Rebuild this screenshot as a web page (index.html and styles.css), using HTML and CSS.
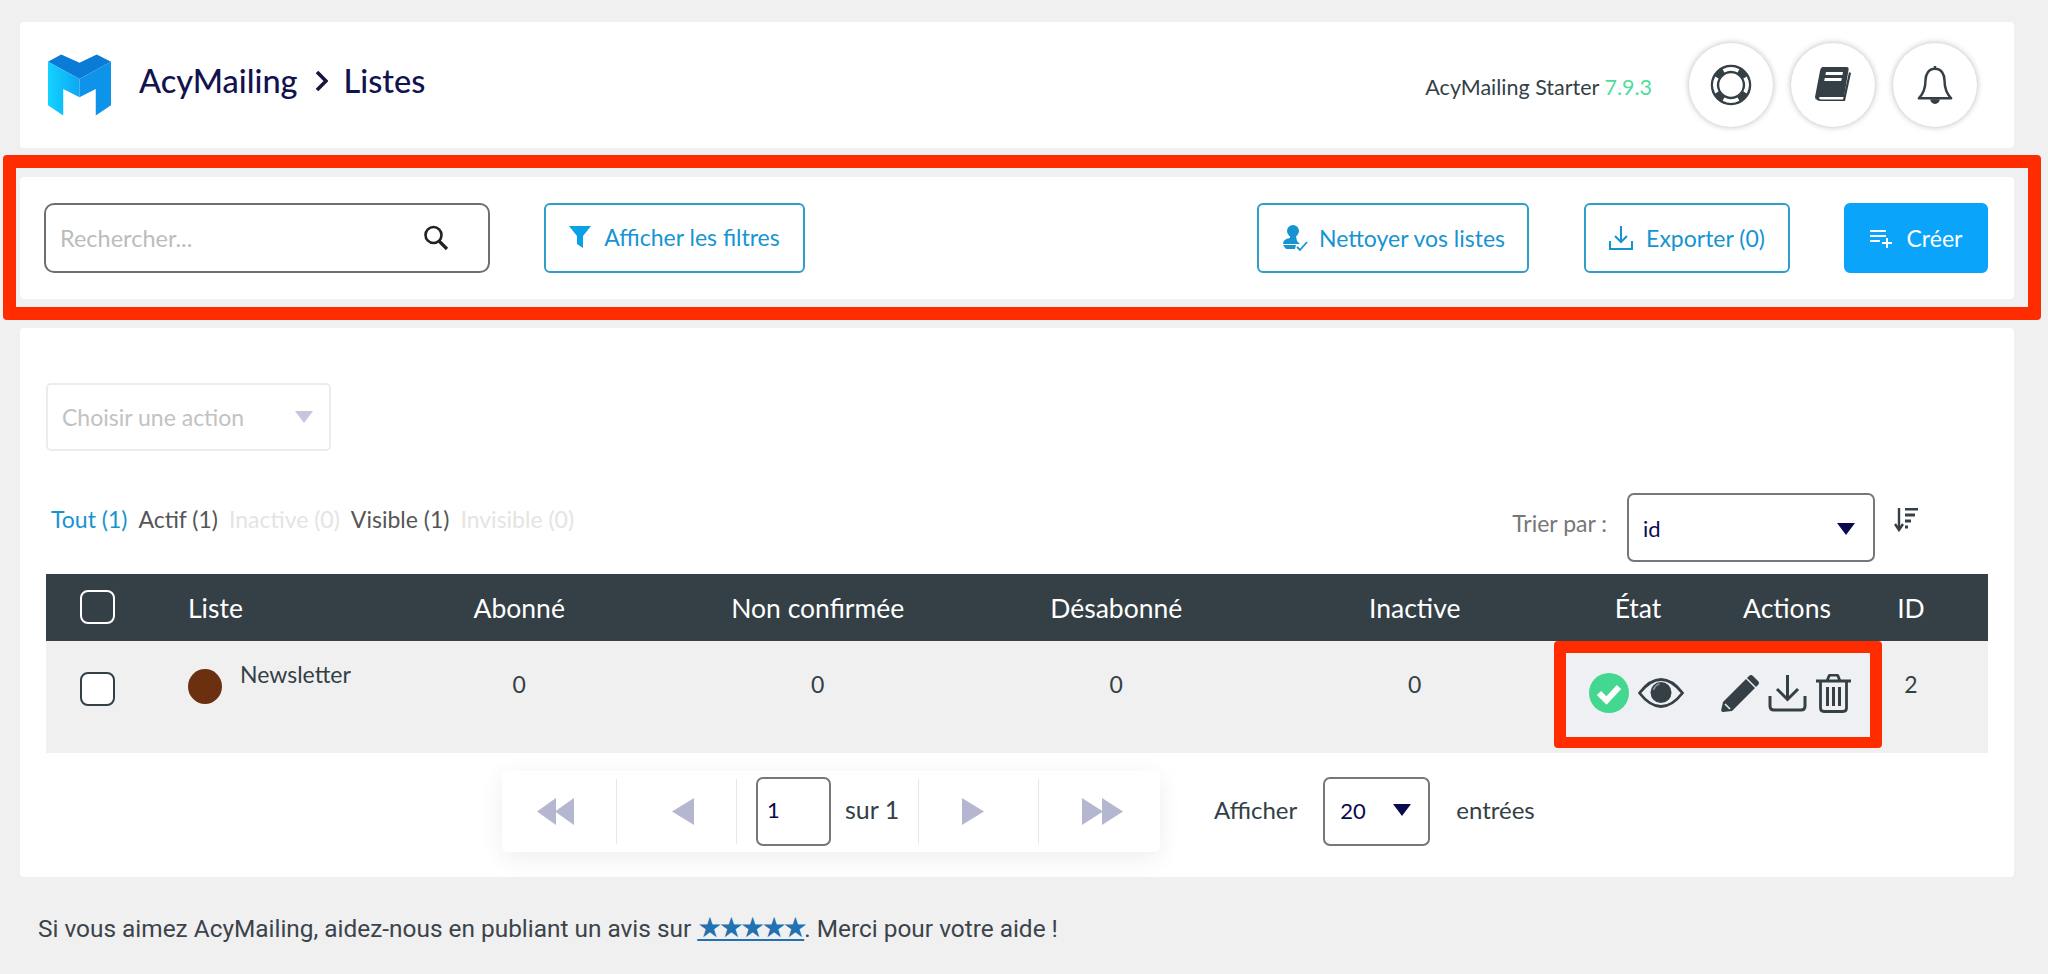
FILE: index.html
```html
<!DOCTYPE html>
<html lang="fr">
<head>
  <meta charset="UTF-8" />
  <meta name="viewport" content="width=device-width, initial-scale=1.0"/>
  <title>AcyMailing - Listes</title>
  <link rel="stylesheet" href="styles.css">
</head>
<body>
  <header class="card top-bar">
    <svg class="logo" viewBox="0 0 62 60">
      <defs>
        <linearGradient id="logoLeft" x1="0" y1="0" x2="1" y2="0">
          <stop offset="0" stop-color="#12d3ff"/>
          <stop offset="1" stop-color="#0ea6f3"/>
        </linearGradient>
      </defs>
      <polygon points="0,7 13,0 31,8 48,0 62,7 31,24" fill="#0a7bd6"/>
      <polygon points="0,7 31,24 31,42 15,34 15,60 0,50" fill="url(#logoLeft)"/>
      <polygon points="62,7 31,24 31,42 47,34 47,60 62,50" fill="#0e93ea"/>
    </svg>
    <h1 class="title">
      <span>AcyMailing</span>
      <svg class="title-chevron" viewBox="0 0 14 22"><path d="M3 2l9 9-9 9" fill="none" stroke="#16163f" stroke-width="3.6"/></svg>
      <span>Listes</span>
    </h1>
    <div class="version">AcyMailing Starter <span class="version-nr">7.9.3</span></div>
    <div class="round-btns">
      <div class="round-btn">
        <svg viewBox="0 0 42 42" width="42" height="42">
          <circle cx="21" cy="21" r="16" fill="none" stroke="#343f46" stroke-width="8.5"/>
          <path d="M13.500 6.900A16 16 0 0 1 28.500 6.900M13.500 35.100A16 16 0 0 0 28.500 35.100M6.900 13.500A16 16 0 0 0 6.900 28.500M35.100 13.500A16 16 0 0 1 35.100 28.500" fill="none" stroke="#fff" stroke-width="3.800"/>
        </svg>
      </div>
      <div class="round-btn">
        <svg viewBox="0 0 40 40" width="40" height="40">
          <path d="M10 2h24q2 0 1.600 2.500L31 32H7q-3 0-4 3l-1-3L7 6q.8-4 3-4z" fill="#343f46"/>
          <path d="M36 7l2 1-6 28H8q-5 0-5-3.500T8 29v2.500q-2 .2-2 1.500t2 1.500h22z" fill="#343f46"/>
          <path d="M13 7h17l-.6 3H12.400zM11.800 13h17l-.6 3H11.200z" fill="#fff"/>
        </svg>
      </div>
      <div class="round-btn">
        <svg viewBox="0 0 40 44" width="38" height="42">
          <path d="M20 2v3M20 5c-7 0-10 6-10 12 0 8-2 14-7 19h34c-5-5-7-11-7-19 0-6-3-12-10-12z" fill="none" stroke="#343f46" stroke-width="2.600" stroke-linejoin="round"/>
          <path d="M15 37a5 5 0 0 0 10 0z" fill="#343f46"/>
        </svg>
      </div>
    </div>
  </header>

  <div class="highlight">
    <section class="card toolbar">
      <div class="search">
        <span class="search-ph">Rechercher...</span>
        <svg viewBox="0 0 28 28" width="28" height="28"><circle cx="11.500" cy="11" r="8" fill="none" stroke="#222" stroke-width="2.600"/><path d="M17 17l8 8" stroke="#222" stroke-width="3.200"/></svg>
      </div>
      <div class="btn btn-filter">
        <svg viewBox="0 0 22 24" width="22" height="24"><path d="M0 1h22l-8 10v12l-6-4v-8z" fill="#0aa0e8"/></svg>
        Afficher les filtres
      </div>
      <div class="btn btn-clean">
        <svg viewBox="0 0 28 28" width="28" height="28">
          <circle cx="12" cy="7" r="6" fill="#1694d2"/>
          <path d="M9 12h6l1 5 3 3H2q0-5 7-6z" fill="#1694d2"/>
          <path d="M2 21h13l-1 4H5z" fill="#1694d2"/>
          <path d="M16 23l3 3 7-8" fill="none" stroke="#1694d2" stroke-width="1.800"/>
        </svg>
        Nettoyer vos listes
      </div>
      <div class="btn btn-export">
        <svg viewBox="0 0 24 26" width="24" height="26">
          <path d="M12 1v16M6 11l6 6 6-6" fill="none" stroke="#1694d2" stroke-width="2"/>
          <path d="M1 16v8h22v-8" fill="none" stroke="#1694d2" stroke-width="2"/>
        </svg>
        Exporter (0)
      </div>
      <div class="btn btn-create">
        <svg viewBox="0 0 24 20" width="24" height="20">
          <path d="M0 3h16M0 8h16M0 13h10M17 10v10M12 15h10" stroke="#fff" stroke-width="2" fill="none"/>
        </svg>
        Créer
      </div>
    </section>
  </div>

  <main class="card content">
    <div class="action-select">
      <span>Choisir une action</span>
      <i class="caret caret-light"></i>
    </div>

    <div class="list-bar">
      <div class="status-tabs">
        <span class="tab tab-on">Tout (1)</span>
        <span class="tab">Actif (1)</span>
        <span class="tab tab-off">Inactive (0)</span>
        <span class="tab">Visible (1)</span>
        <span class="tab tab-off">Invisible (0)</span>
      </div>
      <div class="sorting">
        <span class="sort-label">Trier par :</span>
        <div class="select sort-select"><span>id</span><i class="caret"></i></div>
        <svg class="sort-icon" viewBox="0 0 24 24" width="24" height="24">
          <path d="M5 0v20M1 16l4 6 4-6" fill="none" stroke="#343f46" stroke-width="2.400"/>
          <path d="M11 1h13M11 7h10M11 13h6M11 19h3" stroke="#343f46" stroke-width="2.800"/>
        </svg>
      </div>
    </div>

    <div class="table">
      <div class="table-row table-head">
        <div class="cell-check"><span class="checkbox checkbox-head"></span></div>
        <div>Liste</div>
        <div class="center">Abonné</div>
        <div class="center">Non confirmée</div>
        <div class="center">Désabonné</div>
        <div class="center">Inactive</div>
        <div class="center">État</div>
        <div class="center">Actions</div>
        <div class="center cell-id">ID</div>
      </div>
      <div class="table-row table-body">
        <div class="cell-check"><span class="checkbox"></span></div>
        <div class="cell-name"><span class="dot"></span><span class="name">Newsletter</span></div>
        <div class="center">0</div>
        <div class="center">0</div>
        <div class="center">0</div>
        <div class="center">0</div>
        <div class="cell-state">
          <svg viewBox="0 0 40 40" width="40" height="40">
            <circle cx="20" cy="20" r="20" fill="#43d78f"/>
            <path d="M10 20l7.500 7.500L30 14" fill="none" stroke="#fff" stroke-width="6"/>
          </svg>
          <svg viewBox="0 0 46 30" width="46" height="30">
            <path d="M1.500 15Q12 1.500 23 1.500T44.500 15Q34 28.500 23 28.500T1.500 15z" fill="none" stroke="#343f46" stroke-width="2.800"/>
            <circle cx="23" cy="14.500" r="10.500" fill="#343f46"/>
            <path d="M15.500 12q1.500-5 6-6" fill="none" stroke="#8a9298" stroke-width="1.600"/>
          </svg>
        </div>
        <div class="cell-actions">
          <svg viewBox="0 0 40 40" width="40" height="40">
            <path d="M2 29L25 6l9 9-23 23-9 1q-2 0-1.800-2z" fill="#343f46"/>
            <path d="M28 3q2-2 4 0l5 5q2 2 0 4l-2 2-9-9z" fill="#343f46"/>
            <path d="M4 31l5 5" stroke="#eef0f3" stroke-width="1.600"/>
          </svg>
          <svg viewBox="0 0 39 38" width="39" height="38">
            <path d="M19.500 1v24M9 15l10.500 10.500L30 15" fill="none" stroke="#343f46" stroke-width="3"/>
            <path d="M2 22v10q0 4 4 4h27q4 0 4-4V22" fill="none" stroke="#343f46" stroke-width="3"/>
          </svg>
          <svg viewBox="0 0 35 39" width="35" height="39">
            <path d="M0 7h35M11 7l2-5q.5-1 2-1h5q1.500 0 2 1l2 5" fill="none" stroke="#343f46" stroke-width="2.800"/>
            <path d="M4.500 8v26q0 3.500 3.500 3.500h19q3.500 0 3.500-3.500V8" fill="none" stroke="#343f46" stroke-width="2.800"/>
            <path d="M11.500 13v19M17.500 13v19M23.500 13v19" stroke="#343f46" stroke-width="3"/>
          </svg>
        </div>
        <div class="center cell-id">2</div>
        <div class="row-mark"></div>
      </div>
    </div>

    <div class="pager-line">
      <div class="pager">
        <div class="page-btn page-first"><svg viewBox="0 0 37 27" width="37" height="27"><path d="M19 0v27L0 13.500zM37 0v27L18 13.500z" fill="#b5b6d0"/></svg></div>
        <div class="page-btn page-prev"><svg viewBox="0 0 22 27" width="22" height="27"><path d="M22 0v27L0 13.500z" fill="#b5b6d0"/></svg></div>
        <div class="page-now">
          <div class="select page-input">1</div>
          <span class="page-total">sur 1</span>
        </div>
        <div class="page-btn page-next"><svg viewBox="0 0 22 27" width="22" height="27"><path d="M0 0v27l22-13.500z" fill="#b5b6d0"/></svg></div>
        <div class="page-btn page-last"><svg viewBox="0 0 41 27" width="41" height="27"><path d="M0 0v27l21-13.500zM20 0v27l21-13.500z" fill="#b5b6d0"/></svg></div>
      </div>
      <span class="show-label">Afficher</span>
      <div class="select per-page"><span>20</span><i class="caret"></i></div>
      <span class="show-after">entrées</span>
    </div>
  </main>

  <footer class="foot">Si vous aimez AcyMailing, aidez-nous en publiant un avis sur <a class="stars" href="#">★★★★★</a>. Merci pour votre aide !</footer>
</body>
</html>
```

FILE: styles.css
```css
body {
  margin: 0;
  background: #f0f0f1;
  font-family: Lato, sans-serif;
  color: #343f46;
  height: 974px;
  overflow: hidden;
}

.card {
  background: #fff;
  border-radius: 4px;
  margin: 0 34px 0 20px;
}

.top-bar {
  display: flex;
  align-items: center;
  height: 126px;
  margin-top: 22px;
  padding-left: 28px;
  box-sizing: border-box;
}

.logo {
  width: 63px;
  height: 62px;
}

.title {
  display: flex;
  align-items: center;
  margin: -10px 0 0 28px;
  font-size: 32.500px;
  font-weight: 500;
  color: #12124f;
}

.title-chevron {
  width: 14px;
  height: 22px;
  margin: 2px 16px 0 16px;
}

.version {
  margin: 3px 0 0 auto;
  font-size: 21.500px;
}

.version-nr {
  color: #4fdc9b;
}

.round-btns {
  display: flex;
  gap: 18px;
  margin: 0 37px 0 37px;
}

.round-btn {
  width: 84px;
  height: 84px;
  border-radius: 50%;
  background: #fff;
  box-shadow: 0 0 6px rgba(0,0,0,0.28);
  display: flex;
  align-items: center;
  justify-content: center;
}

.highlight {
  margin: 7px 7px 0 3px;
  padding: 9px 14px 8px 4px;
  background: #eff0f2;
  border: 13px solid #ff2c00;
  border-radius: 4px;
}

.toolbar {
  margin: 0;
  height: 122px;
  display: flex;
  align-items: center;
  padding: 0 26px 0 24px;
  box-sizing: border-box;
}

.search {
  width: 446px;
  height: 70px;
  box-sizing: border-box;
  border: 2px solid #6f6f6f;
  border-radius: 10px;
  display: flex;
  align-items: center;
  justify-content: space-between;
  padding: 0 38px 0 14px;
}

.search-ph {
  font-size: 23.500px;
  color: #bcbcbc;
}

.btn {
  height: 70px;
  box-sizing: border-box;
  border: 2px solid #2f9fc9;
  border-radius: 6px;
  display: flex;
  align-items: center;
  justify-content: center;
  gap: 13px;
  color: #1694d2;
  font-size: 23px;
}

.btn-filter {
  width: 261px;
  margin-left: 54px;
  margin-right: auto;
  padding-bottom: 3px;
}

.btn-clean {
  width: 272px;
  gap: 10px;
}

.btn-export {
  width: 206px;
  margin-left: 55px;
}

.btn-create {
  width: 144px;
  margin-left: 54px;
  background: #0aa5fb;
  border-color: #0aa5fb;
  color: #fff;
}

.content {
  margin-top: 8px;
  height: 549px;
  padding: 55px 26px 0;
  box-sizing: border-box;
}

.action-select {
  width: 285px;
  height: 68px;
  box-sizing: border-box;
  border: 2px solid #ececec;
  border-radius: 5px;
  display: flex;
  align-items: center;
  justify-content: space-between;
  padding: 0 16px 0 14px;
  font-size: 23px;
  color: #c2c2c2;
}

.caret {
  width: 0;
  height: 0;
  border-left: 9px solid transparent;
  border-right: 9px solid transparent;
  border-top: 12px solid #0a0a50;
}

.caret-light {
  border-top-color: #c5c6de;
}

.list-bar {
  height: 123px;
  padding-top: 28px;
  box-sizing: border-box;
  display: flex;
  align-items: center;
  justify-content: space-between;
}

.status-tabs {
  display: flex;
  gap: 11px;
  font-size: 23px;
  color: #555;
  padding: 0 0 15px 5px;
}

.tab-on {
  color: #1694d2;
}

.tab-off {
  color: #e4e4e4;
}

.sorting {
  display: flex;
  align-items: center;
  margin-right: 113px;
}

.sort-label {
  font-size: 23px;
  color: #777;
  margin: 0 20px 8px 0;
}

.select {
  box-sizing: border-box;
  border: 2px solid #777;
  border-radius: 7px;
  display: flex;
  align-items: center;
  justify-content: space-between;
  color: #0a0a50;
  font-size: 22px;
  background: #fff;
}

.sort-select {
  width: 248px;
  height: 69px;
  padding: 2px 18px 0 14px;
  margin-bottom: -2px;
}

.sort-icon {
  margin: -14px -43px 0 19px;
}

.table-row {
  display: grid;
  grid-template-columns: 142px 182px repeat(4, 298.500px) 148px 150px 1fr;
}

.center {
  text-align: center;
}

.cell-id {
  padding-right: 28px;
}

.table-head {
  height: 67px;
  padding-top: 1px;
  box-sizing: border-box;
  background: #343f46;
  color: #fff;
  font-size: 26.500px;
  align-items: center;
}

.checkbox {
  display: block;
  width: 35px;
  height: 34px;
  box-sizing: border-box;
  border: 2px solid #343f46;
  border-radius: 8px;
  background: #fff;
}

.checkbox-head {
  background: transparent;
  border-color: #fff;
  margin-top: -2px;
}

.cell-check {
  padding-left: 34px;
}

.table-body {
  position: relative;
  height: 112px;
  background: #f0f0f1;
  font-size: 23px;
  padding-top: 32px;
  box-sizing: border-box;
}

.table-body .cell-check {
  margin-top: -1px;
}

.table-body .center {
  margin-top: -3px;
}

.cell-name {
  display: flex;
  align-items: flex-start;
  margin-top: -4px;
}

.dot {
  width: 34px;
  height: 35px;
  border-radius: 50%;
  background: #6b3010;
  margin-right: 18px;
}

.name {
  margin-top: -9px;
}

.cell-state {
  display: flex;
  align-items: center;
  gap: 9px;
  padding-left: 25px;
  height: 40px;
  position: relative;
  z-index: 1;
}

.cell-actions {
  display: flex;
  align-items: center;
  gap: 7px;
  padding-left: 9px;
  height: 40px;
  position: relative;
  z-index: 1;
}

.cell-actions svg:last-child {
  margin-left: 2px;
}

.row-mark {
  position: absolute;
  left: 1508px;
  top: 0;
  width: 328px;
  height: 107px;
  box-sizing: border-box;
  background: #eef0f3;
  border: 12px solid #ff2c00;
  border-bottom-width: 11px;
  border-radius: 4px;
}

.pager-line {
  display: flex;
  align-items: center;
  height: 99px;
  padding-left: 456px;
  padding-top: 17px;
  font-size: 24px;
  box-sizing: border-box;
}

.pager {
  width: 658px;
  height: 81px;
  display: flex;
  align-items: center;
  background: #fff;
  border-radius: 5px;
  box-shadow: 0 6px 24px rgba(0,0,0,0.07);
}

.page-btn {
  height: 65px;
  width: 120px;
  box-sizing: border-box;
  display: flex;
  align-items: center;
  justify-content: center;
  border-right: 1px solid #e8e8e8;
}

.page-first {
  width: 115px;
  padding-right: 7px;
}

.page-prev {
  padding-left: 12px;
}

.page-next {
  padding-right: 11px;
}

.page-last {
  border-right: none;
  flex: 1;
  padding-left: 6px;
}

.page-now {
  width: 182px;
  height: 65px;
  border-right: 1px solid #e8e8e8;
  display: flex;
  align-items: center;
  padding-left: 19px;
  box-sizing: border-box;
  gap: 14px;
}

.page-total {
  font-size: 25px;
  padding-bottom: 4px;
}

.page-input {
  width: 75px;
  height: 69px;
  padding: 0 0 3px 9px;
}

.show-label {
  margin: 0 0 4px 54px;
}

.per-page {
  width: 107px;
  height: 69px;
  margin-left: 26px;
  padding: 0 17px 2px 15px;
}

.show-after {
  margin: 0 0 3px 26px;
}

.foot {
  margin: 37px 0 0 38px;
  font-family: Roboto, sans-serif;
  font-size: 24.400px;
  color: #3c434a;
}

.stars {
  color: #2271b1;
  font-family: "DejaVu Sans", sans-serif;
  font-size: 28px;
  letter-spacing: -3.700px;
  line-height: 20px;
}
```
